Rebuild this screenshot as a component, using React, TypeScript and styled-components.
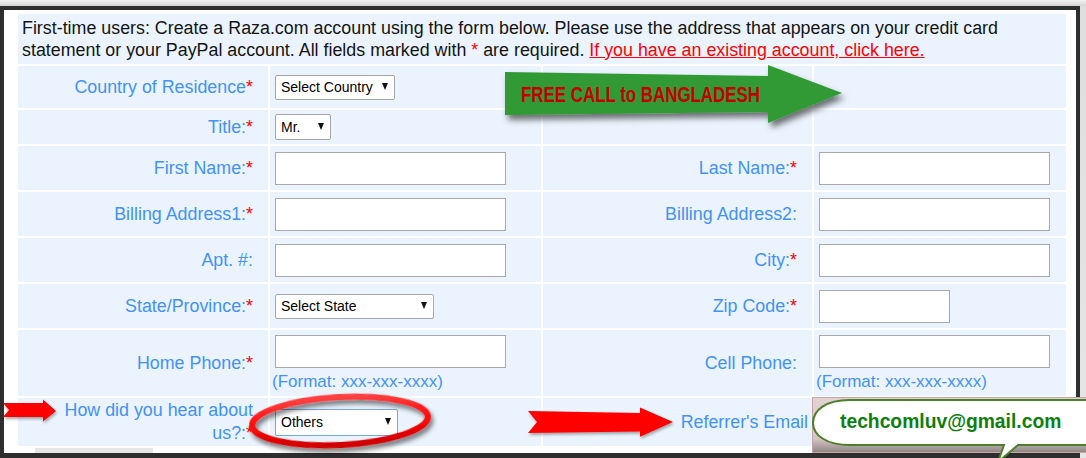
import React from "react";
import styled, { createGlobalStyle } from "styled-components";

const GlobalStyle = createGlobalStyle`
  html, body { margin: 0; padding: 0; }
  body { background: #e2e2e2; font-family: "Liberation Sans", Arial, sans-serif; }
  #root { width: 1086px; height: 458px; }
`;

const Page = styled.div`
  position: relative;
  width: 1086px;
  height: 458px;
  overflow: hidden;
  padding-top: 6px;
  box-sizing: border-box;
  background: linear-gradient(to bottom, #f3f3f3 0, #d4d4d4 6px, #dedede 6px, #e6e6e6 100%);
`;

const Frame = styled.div`
  width: 1080px;
  height: 452px;
  box-sizing: border-box;
  border: 4px solid #2e2e2e;
  border-bottom-width: 5px;
  background: #fff;
  padding: 4px 10px 0 14px;
  display: flex;
  flex-direction: column;
`;

const Table = styled.div`
  display: grid;
  grid-template-columns: 250px 271px 269px 252px;
  grid-template-rows: 50px 42px 34px 44px 44px 44px 44px 66px 48px;
  gap: 2px;
  background: #fff;
`;

const cellBg = "#ebf4fe";

const Intro = styled.div`
  grid-column: 1 / -1;
  background: ${cellBg};
  padding: 3px 4px;
  font-size: 17.85px;
  line-height: 22px;
  color: #141414;
`;

const Req = styled.span`
  color: #ff0000;
`;

const Link = styled.a`
  color: #ff0000;
  text-decoration: underline;
`;

const Label = styled.div<{ $pr?: number }>`
  background: ${cellBg};
  display: flex;
  align-items: center;
  justify-content: flex-end;
  text-align: right;
  padding: 0 ${(p) => p.$pr ?? 15}px 0 20px;
  color: #4292f5;
  font-size: 17.85px;
  line-height: 23px;
`;

const Field = styled.div<{ $top?: boolean }>`
  background: ${cellBg};
  display: flex;
  flex-direction: column;
  align-items: flex-start;
  justify-content: ${(p) => (p.$top ? "flex-start" : "center")};
  padding: ${(p) => (p.$top ? "5px 0 0 5px" : "0 0 0 5px")};
`;

const Blank = styled.div`
  background: ${cellBg};
`;

const TextBox = styled.input<{ $w?: number }>`
  width: ${(p) => p.$w ?? 231}px;
  height: 33px;
  box-sizing: border-box;
  margin: 0;
  padding: 0 4px;
  border: 1px solid #a9a9a9;
  background: #fff;
  outline: none;
  font-family: inherit;
`;

const Select = styled.div<{ $w: number; $h?: number; $focus?: boolean }>`
  width: ${(p) => p.$w}px;
  height: ${(p) => p.$h ?? 25}px;
  box-sizing: border-box;
  border: 1px solid ${(p) => (p.$focus ? "#7aa6df" : "#a6a6a6")};
  border-radius: 2px;
  background: #fff;
  display: flex;
  align-items: center;
  justify-content: space-between;
  padding: 0 6px 0 5px;
  font-size: 14px;
  color: #000;
`;

const Caret = styled.span`
  width: 0;
  height: 0;
  border-left: 3.5px solid transparent;
  border-right: 3.5px solid transparent;
  border-top: 7px solid #111;
  margin-top: -2px;
`;

const Format = styled.div`
  margin: 4px 0 0 -3px;
  font-size: 17px;
  line-height: 20px;
  color: #4292f5;
`;

const GrayTab = styled.div`
  margin: 2px 0 0 17px;
  width: 118px;
  height: 5px;
  background: #e6e6e6;
`;

/* ---------- annotations drawn over the page ---------- */

const Overlay = styled.svg<{ $x: number; $y: number }>`
  position: absolute;
  left: ${(p) => p.$x}px;
  top: ${(p) => p.$y}px;
  overflow: visible;
  pointer-events: none;
`;

const GreenArrow = () => (
  <Overlay $x={495} $y={55} width={365} height={85}>
    <defs>
      <filter id="gshadow" x="-10%" y="-20%" width="130%" height="160%">
        <feDropShadow dx="3" dy="5" stdDeviation="3" floodColor="#000" floodOpacity="0.55" />
      </filter>
    </defs>
    <polygon
      points="10,17 273,21 273,10 347,38 273,68 273,57 10,60"
      fill="#339a36"
      filter="url(#gshadow)"
    />
    <text
      x="26"
      y="46.5"
      fontFamily="'Liberation Sans', Arial, sans-serif"
      fontSize="21.5"
      fontWeight="bold"
      fill="#c40000"
      textLength="239"
      lengthAdjust="spacingAndGlyphs"
    >
      FREE CALL to BANGLADESH
    </text>
  </Overlay>
);

const RedArrow = ({ x, y, points, w, h }: { x: number; y: number; points: string; w: number; h: number }) => (
  <Overlay $x={x} $y={y} width={w} height={h}>
    <defs>
      <filter id={`rs${x}`} x="-10%" y="-30%" width="130%" height="180%">
        <feDropShadow dx="1" dy="2" stdDeviation="1.5" floodColor="#000" floodOpacity="0.35" />
      </filter>
    </defs>
    <polygon points={points} fill="#ff0000" filter={`url(#rs${x})`} />
  </Overlay>
);

const Oval = () => (
  <Overlay $x={240} $y={385} width={205} height={73}>
    <defs>
      <linearGradient id="ovalg" x1="0" y1="0" x2="0" y2="1">
        <stop offset="0" stopColor="#ff4040" />
        <stop offset="0.5" stopColor="#ff0a0a" />
        <stop offset="1" stopColor="#d00000" />
      </linearGradient>
      <filter id="ovals" x="-20%" y="-40%" width="140%" height="190%">
        <feDropShadow dx="2" dy="4" stdDeviation="2.5" floodColor="#000" floodOpacity="0.55" />
      </filter>
    </defs>
    <ellipse
      cx="100"
      cy="36"
      rx="88"
      ry="24"
      transform="rotate(-3 100 36)"
      fill="none"
      stroke="url(#ovalg)"
      strokeWidth="6"
      filter="url(#ovals)"
    />
  </Overlay>
);

const BubbleBox = styled.div`
  position: absolute;
  left: 812px;
  top: 396px;
  width: 274px;
  height: 62px;
`;

const BubbleArt = styled.svg`
  position: absolute;
  left: 0;
  top: 0;
  overflow: visible;
`;

const BubbleText = styled.span`
  position: absolute;
  left: 28px;
  top: 14px;
  font-size: 19.3px;
  line-height: 24px;
  font-weight: bold;
  color: #0e7f0e;
  white-space: nowrap;
`;

const Bubble = () => (
  <BubbleBox>
    <BubbleArt width={274} height={62}>
      <defs>
        <linearGradient id="pasteg" x1="0" y1="0" x2="0" y2="1">
          <stop offset="0" stopColor="#e2d2d2" />
          <stop offset="0.75" stopColor="#d6c6c6" />
          <stop offset="1" stopColor="#8e8484" />
        </linearGradient>
      </defs>
      <rect x="0.5" y="1.5" width="274" height="55" fill="url(#pasteg)" stroke="#c9a4a4" />
      <path
        d="M 38 4 L 280 4 L 280 49 L 206 49 L 186 66 L 192 49 L 38 49 C 14 49 1 39 1 27 C 1 14 14 4 38 4 Z"
        fill="#fff"
        stroke="#4d7e2a"
        strokeWidth="2"
      />
    </BubbleArt>
    <BubbleText>techcomluv@gmail.com</BubbleText>
  </BubbleBox>
);

export default function App() {
  return (
    <>
      <GlobalStyle />
      <Page>
        <Frame>
          <Table>
            <Intro>
              First-time users: Create a Raza.com account using the form below. Please use the address that
              appears on your credit card statement or your PayPal account. All fields marked with <Req>*</Req> are
              required. <Link href="#">If you have an existing account, click here.</Link>
            </Intro>

            <Label>
              Country of Residence<Req>*</Req>
            </Label>
            <Field>
              <Select $w={120}>
                Select Country
                <Caret />
              </Select>
            </Field>
            <Blank />
            <Blank />

            <Label>
              Title:<Req>*</Req>
            </Label>
            <Field>
              <Select $w={56} $h={26}>
                Mr.
                <Caret />
              </Select>
            </Field>
            <Blank />
            <Blank />

            <Label>
              First Name:<Req>*</Req>
            </Label>
            <Field>
              <TextBox />
            </Field>
            <Label>
              Last Name:<Req>*</Req>
            </Label>
            <Field>
              <TextBox />
            </Field>

            <Label>
              Billing Address1:<Req>*</Req>
            </Label>
            <Field>
              <TextBox />
            </Field>
            <Label>Billing Address2:</Label>
            <Field>
              <TextBox />
            </Field>

            <Label>Apt. #:</Label>
            <Field>
              <TextBox />
            </Field>
            <Label>
              City:<Req>*</Req>
            </Label>
            <Field>
              <TextBox />
            </Field>

            <Label>
              State/Province:<Req>*</Req>
            </Label>
            <Field>
              <Select $w={159}>
                Select State
                <Caret />
              </Select>
            </Field>
            <Label>
              Zip Code:<Req>*</Req>
            </Label>
            <Field>
              <TextBox $w={131} />
            </Field>

            <Label>
              Home Phone:<Req>*</Req>
            </Label>
            <Field $top>
              <TextBox />
              <Format>(Format: xxx-xxx-xxxx)</Format>
            </Field>
            <Label>Cell Phone:</Label>
            <Field $top>
              <TextBox />
              <Format>(Format: xxx-xxx-xxxx)</Format>
            </Field>

            <Label>
              <span>
                How did you hear about us?:<Req>*</Req>
              </span>
            </Label>
            <Field>
              <Select $w={123} $h={27} $focus>
                Others
                <Caret />
              </Select>
            </Field>
            <Label $pr={4}>Referrer's Email</Label>
            <Field>
              <TextBox />
            </Field>
          </Table>
          <GrayTab />
        </Frame>

        <GreenArrow />
        <RedArrow x={0} y={395} w={62} h={32} points="3,8 43,8 43,4.5 56,16 43,26.5 43,22 3,22 9,15" />
        <RedArrow
          x={520}
          y={400}
          w={165}
          h={45}
          points="8,11 120,13 120,7.5 153,22 120,36.7 120,31.5 8,33 17,22"
        />
        <Oval />
        <Bubble />
      </Page>
    </>
  );
}
